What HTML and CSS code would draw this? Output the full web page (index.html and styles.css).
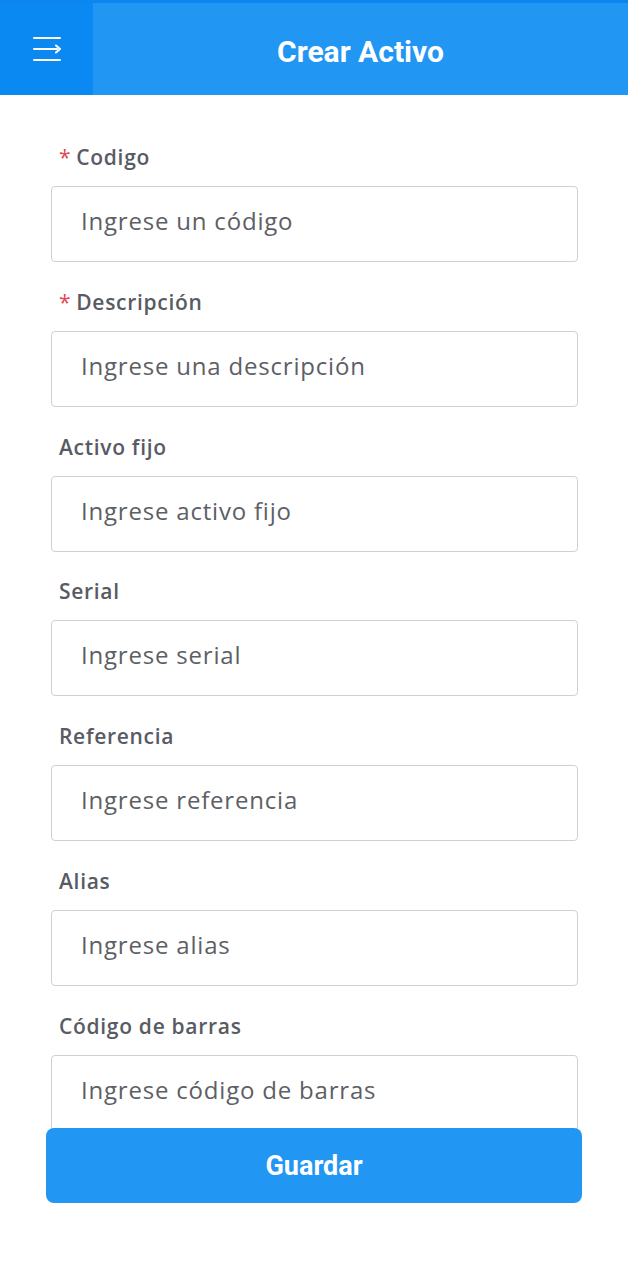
FILE: index.html
```html
<!DOCTYPE html>
<html lang="es">
<head>
<meta charset="utf-8">
<title>Crear Activo</title>
<link rel="stylesheet" href="styles.css">
</head>
<body>
<header class="topbar">
  <button class="menu-btn" aria-label="Menú">
    <svg width="28" height="26" viewBox="0 0 28 26" fill="none" stroke="#fff" stroke-width="2" stroke-linecap="round" stroke-linejoin="round">
      <line x1="1" y1="2" x2="27" y2="2"/>
      <line x1="1" y1="13" x2="24" y2="13"/>
      <polyline points="23,9.5 27,13 23,16.5"/>
      <line x1="1" y1="24" x2="27" y2="24"/>
    </svg>
  </button>
  <h1 class="title">Crear Activo</h1>
</header>
<main class="form">
  <div class="field">
    <label class="label"><span class="req">*</span>Codigo</label>
    <div class="input">Ingrese un código</div>
  </div>
  <div class="field">
    <label class="label"><span class="req">*</span>Descripción</label>
    <div class="input">Ingrese una descripción</div>
  </div>
  <div class="field">
    <label class="label">Activo fijo</label>
    <div class="input">Ingrese activo fijo</div>
  </div>
  <div class="field">
    <label class="label">Serial</label>
    <div class="input">Ingrese serial</div>
  </div>
  <div class="field">
    <label class="label">Referencia</label>
    <div class="input">Ingrese referencia</div>
  </div>
  <div class="field">
    <label class="label">Alias</label>
    <div class="input">Ingrese alias</div>
  </div>
  <div class="field">
    <label class="label">Código de barras</label>
    <div class="input">Ingrese código de barras</div>
  </div>
</main>
<button class="save">Guardar</button>
</body>
</html>
```

FILE: styles.css
```css
html, body {
  margin: 0;
  padding: 0;
  height: 1280px;
  overflow: hidden;
  background: #fff;
}
body {
  font-family: "Open Sans", "Noto Sans", sans-serif;
}
.topbar {
  display: flex;
  height: 92px;
  border-top: 3px solid #0d85ef;
  background: #2196f3;
}
.menu-btn {
  width: 93px;
  height: 92px;
  border: 0;
  padding: 0;
  background: #0a89f2;
  display: flex;
  align-items: center;
  justify-content: center;
}
.title {
  flex: 1;
  margin: 0;
  padding-top: 3px;
  text-align: center;
  line-height: 92px;
  font-family: Roboto, sans-serif;
  font-weight: 700;
  font-size: 30px;
  color: #fff;
}
.form {
  padding: 47px 50px 0 51px;
  display: flex;
  flex-direction: column;
  gap: 24.8px;
}
.field {
  display: flex;
  flex-direction: column;
  gap: 14px;
}
.label {
  padding-left: 8px;
  height: 30px;
  line-height: 30px;
  font-size: 21px;
  font-weight: 600;
  letter-spacing: 0.7px;
  color: #585b63;
}
.req {
  color: #e0474e;
  font-weight: 400;
  margin-right: 5px;
}
.input {
  height: 74px;
  border: 1px solid #d0d0d3;
  border-radius: 4px;
  padding-left: 29px;
  line-height: 68px;
  font-size: 24px;
  letter-spacing: 0.8px;
  color: #5d5f66;
}
.save {
  position: fixed;
  left: 46px;
  right: 46px;
  top: 1128px;
  height: 75px;
  border: 0;
  border-radius: 8px;
  background: #2196f3;
  color: #fff;
  font-family: Roboto, sans-serif;
  font-weight: 700;
  font-size: 27px;
}
```
